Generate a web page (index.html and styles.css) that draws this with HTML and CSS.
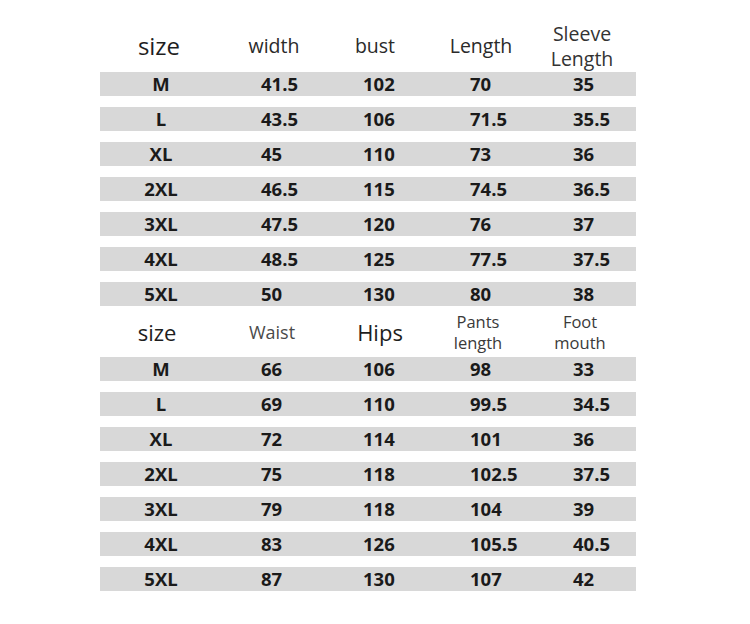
FILE: index.html
```html
<!DOCTYPE html>
<html>
<head>
<meta charset="utf-8">
<link rel="stylesheet" href="styles.css">
</head>
<body>
<div class="chart">
  <section class="section">
    <div class="head head-top">
      <div class="h h-size">size</div>
      <div class="h">width</div>
      <div class="h">bust</div>
      <div class="h">Length</div>
      <div class="h h-two">Sleeve<br>Length</div>
    </div>
    <div class="rows">
      <div class="row"><span class="c1">M</span><span>41.5</span><span>102</span><span>70</span><span>35</span></div>
      <div class="row"><span class="c1">L</span><span>43.5</span><span>106</span><span>71.5</span><span>35.5</span></div>
      <div class="row"><span class="c1">XL</span><span>45</span><span>110</span><span>73</span><span>36</span></div>
      <div class="row"><span class="c1">2XL</span><span>46.5</span><span>115</span><span>74.5</span><span>36.5</span></div>
      <div class="row"><span class="c1">3XL</span><span>47.5</span><span>120</span><span>76</span><span>37</span></div>
      <div class="row"><span class="c1">4XL</span><span>48.5</span><span>125</span><span>77.5</span><span>37.5</span></div>
      <div class="row"><span class="c1">5XL</span><span>50</span><span>130</span><span>80</span><span>38</span></div>
    </div>
  </section>
  <section class="section">
    <div class="head head-bottom">
      <div class="h h-size2">size</div>
      <div class="h h-waist">Waist</div>
      <div class="h h-hips">Hips</div>
      <div class="h h-two2">Pants<br>length</div>
      <div class="h h-two2">Foot<br>mouth</div>
    </div>
    <div class="rows">
      <div class="row"><span class="c1">M</span><span>66</span><span>106</span><span>98</span><span>33</span></div>
      <div class="row"><span class="c1">L</span><span>69</span><span>110</span><span>99.5</span><span>34.5</span></div>
      <div class="row"><span class="c1">XL</span><span>72</span><span>114</span><span>101</span><span>36</span></div>
      <div class="row"><span class="c1">2XL</span><span>75</span><span>118</span><span>102.5</span><span>37.5</span></div>
      <div class="row"><span class="c1">3XL</span><span>79</span><span>118</span><span>104</span><span>39</span></div>
      <div class="row"><span class="c1">4XL</span><span>83</span><span>126</span><span>105.5</span><span>40.5</span></div>
      <div class="row"><span class="c1">5XL</span><span>87</span><span>130</span><span>107</span><span>42</span></div>
    </div>
  </section>
</div>
</body>
</html>
```

FILE: styles.css
```css
* { box-sizing: border-box; }
html, body { margin: 0; padding: 0; background: #ffffff; }
body {
  font-family: "Open Sans", "Noto Sans", sans-serif;
  color: #1c1c1c;
  width: 750px;
  height: 624px;
  overflow: hidden;
}
.chart {
  padding: 20px 0 0 100px;
  width: 536px;
  box-sizing: content-box;
}
.section { display: flex; flex-direction: column; }
.head {
  display: grid;
  grid-template-columns: 118px 112px 90px 122px 80px;
  align-items: center;
  color: #2a2a2a;
}
.head-top { height: 52px; }
.head-bottom {
  height: 51px;
  grid-template-columns: 114px 116px 100px 96px 108px;
}
.h {
  text-align: center;
  font-size: 19.5px;
  line-height: 24px;
  white-space: nowrap;
}
.h-size { font-size: 24px; color: #1e1e1e; }
.h-two { line-height: 25px; color: #333; }
.h-size2 { font-size: 22px; color: #1e1e1e; }
.h-waist { font-size: 18px; color: #4a4a4a; }
.h-hips { font-size: 22px; color: #1e1e1e; }
.h-two2 { font-size: 16.5px; line-height: 21px; color: #3a3a3a; }
.rows {
  display: flex;
  flex-direction: column;
  gap: 11px;
}
.row {
  height: 24px;
  background: #d8d8d8;
  display: grid;
  grid-template-columns: 161px 102px 107px 103px 1fr;
  align-items: center;
  font-weight: 700;
  font-size: 18.5px;
  line-height: 24px;
  color: #1a1a1a;
}
.row .c1 {
  text-align: center;
  padding-right: 39px;
}
```
